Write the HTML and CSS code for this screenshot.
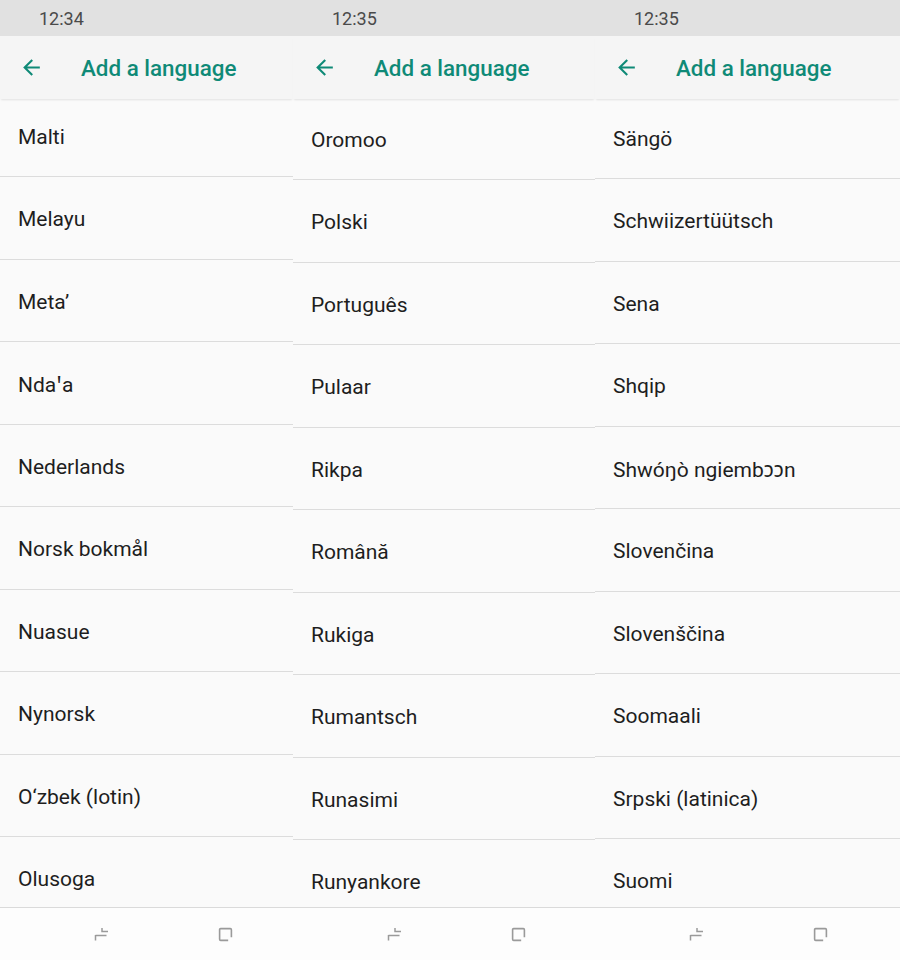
FILE: index.html
```html
<!DOCTYPE html>
<html lang="en">
    <head>
        <meta charset="utf-8">
        <meta name="viewport" content="width=device-width, initial-scale=1">
        <title>Add a language</title>
        <link rel="stylesheet" href="styles.css">
    </head>
    <body>
        <div class="screens">
            <section class="phone" id="phone1">
                <div class="statusbar"><span class="time">12:34</span></div>
                <header class="toolbar">
                    <svg class="back" viewBox="0 0 24 24"><path d="M20 11H7.83l5.59-5.59L12 4l-8 8 8 8 1.41-1.41L7.83 13H20v-2z"/></svg>
                    <h1>Add a language</h1>
                </header>
                <div class="list">
                    <ul class="items">
                        <li>Malti</li>
                        <li>Melayu</li>
                        <li>Meta’</li>
                        <li>Ndaꞌa</li>
                        <li>Nederlands</li>
                        <li>Norsk bokmål</li>
                        <li>Nuasue</li>
                        <li>Nynorsk</li>
                        <li>O‘zbek (lotin)</li>
                        <li>Olusoga</li>
                    </ul>
                </div>
                <nav class="navbar">
                    <svg class="nav recents" viewBox="0 0 15 15"><path d="M8 1v3.5h6M1.5 8.5h11M1.5 8v5.5"/></svg>
                    <svg class="nav home" viewBox="0 0 14 14"><path d="M12.5 9.5V2.5A1 1 0 0 0 11.5 1.5H2.5A1 1 0 0 0 1.5 2.5V11.5A1 1 0 0 0 2.5 12.5H9.5"/></svg>
                </nav>
            </section>

            <section class="phone" id="phone2">
                <div class="statusbar"><span class="time">12:35</span></div>
                <header class="toolbar">
                    <svg class="back" viewBox="0 0 24 24"><path d="M20 11H7.83l5.59-5.59L12 4l-8 8 8 8 1.41-1.41L7.83 13H20v-2z"/></svg>
                    <h1>Add a language</h1>
                </header>
                <div class="list">
                    <ul class="items">
                        <li>Oromoo</li>
                        <li>Polski</li>
                        <li>Português</li>
                        <li>Pulaar</li>
                        <li>Rikpa</li>
                        <li>Română</li>
                        <li>Rukiga</li>
                        <li>Rumantsch</li>
                        <li>Runasimi</li>
                        <li>Runyankore</li>
                    </ul>
                </div>
                <nav class="navbar">
                    <svg class="nav recents" viewBox="0 0 15 15"><path d="M8 1v3.5h6M1.5 8.5h11M1.5 8v5.5"/></svg>
                    <svg class="nav home" viewBox="0 0 14 14"><path d="M12.5 9.5V2.5A1 1 0 0 0 11.5 1.5H2.5A1 1 0 0 0 1.5 2.5V11.5A1 1 0 0 0 2.5 12.5H9.5"/></svg>
                </nav>
            </section>

            <section class="phone" id="phone3">
                <div class="statusbar"><span class="time">12:35</span></div>
                <header class="toolbar">
                    <svg class="back" viewBox="0 0 24 24"><path d="M20 11H7.83l5.59-5.59L12 4l-8 8 8 8 1.41-1.41L7.83 13H20v-2z"/></svg>
                    <h1>Add a language</h1>
                </header>
                <div class="list">
                    <ul class="items">
                        <li>Sängö</li>
                        <li>Schwiizertüütsch</li>
                        <li>Sena</li>
                        <li>Shqip</li>
                        <li>Shwóŋò ngiembɔɔn</li>
                        <li>Slovenčina</li>
                        <li>Slovenščina</li>
                        <li>Soomaali</li>
                        <li>Srpski (latinica)</li>
                        <li>Suomi</li>
                    </ul>
                </div>
                <nav class="navbar">
                    <svg class="nav recents" viewBox="0 0 15 15"><path d="M8 1v3.5h6M1.5 8.5h11M1.5 8v5.5"/></svg>
                    <svg class="nav home" viewBox="0 0 14 14"><path d="M12.5 9.5V2.5A1 1 0 0 0 11.5 1.5H2.5A1 1 0 0 0 1.5 2.5V11.5A1 1 0 0 0 2.5 12.5H9.5"/></svg>
                </nav>
            </section>
        </div>
    </body>
</html>
```

FILE: styles.css
```css
body {
    margin: 0;
    font-family: Roboto, "Noto Sans", sans-serif;
    background: #fafafa;
}

.screens {
    display: flex;
    width: 900px;
    height: 960px;
    overflow: hidden;
}

.phone {
    display: flex;
    flex-direction: column;
    height: 960px;
    background: #fafafa;
}

#phone1 { width: 293px; }
#phone2 { width: 302px; }
#phone3 { width: 305px; }

.statusbar {
    height: 36px;
    flex: none;
    display: flex;
    align-items: center;
    padding-left: 39px;
    background: #e1e1e1;
}

.statusbar .time {
    font-size: 18px;
    color: #4a4a4a;
    padding-top: 1px;
}

.toolbar {
    position: relative;
    z-index: 1;
    height: 63px;
    flex: none;
    display: flex;
    align-items: center;
    background: #f5f5f5;
    box-shadow: 0 2px 2px -1px rgba(0, 0, 0, 0.1);
}

.toolbar .back {
    width: 25px;
    height: 25px;
    margin-left: 19px;
    fill: #0f8a77;
}

.toolbar h1 {
    margin: 0 0 0 37px;
    padding-top: 1px;
    font-size: 22.4px;
    font-weight: 500;
    color: #0f8a77;
}

.list {
    flex: 1;
    overflow: hidden;
}

.items {
    list-style: none;
    margin: 0;
    padding: 0;
}

/* scroll position of each screen */
#phone1 .items { margin-top: -4.5px; }
#phone2 .items { margin-top: -1.5px; }
#phone3 .items { margin-top: -2.5px; }

.items li {
    box-sizing: border-box;
    height: 82.5px;
    display: flex;
    align-items: center;
    padding: 3px 0 0 18px;
    font-size: 21px;
    color: #1e1e1e;
    border-bottom: 1px solid #dcdcdc;
}

.navbar {
    height: 52px;
    flex: none;
    display: flex;
    align-items: center;
    gap: 109px;
    padding-left: 94px;
    background: #fdfdfd;
    border-top: 1px solid #dadada;
}

.navbar .nav {
    width: 15px;
    height: 15px;
    fill: none;
    stroke: #9a9a9a;
    stroke-width: 1.5;
}
```
